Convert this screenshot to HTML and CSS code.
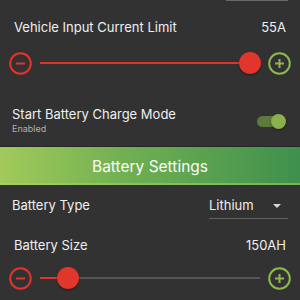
FILE: index.html
```html
<!DOCTYPE html>
<html>
<head>
<meta charset="utf-8">
<link rel="stylesheet" href="styles.css">
</head>
<body>
<div class="screen">
  <div class="prev-underline"><div class="line"></div></div>

  <div class="value-row first">
    <span class="label">Vehicle Input Current Limit</span>
    <span class="value">55A</span>
  </div>
  <div class="slider slider-1">
    <svg class="btn" width="23" height="23" viewBox="0 0 23 23"><circle cx="11.5" cy="11.5" r="10.3" fill="none" stroke="#e3342a" stroke-width="2"/><line x1="7" y1="11.5" x2="16" y2="11.5" stroke="#e3342a" stroke-width="2"/></svg>
    <div class="track">
      <div class="fill" style="width:95.5%"></div>
      <div class="thumb" style="left:95.5%"></div>
    </div>
    <svg class="btn" width="23" height="23" viewBox="0 0 23 23"><circle cx="11.5" cy="11.5" r="10.3" fill="none" stroke="#8cb84c" stroke-width="2"/><line x1="7" y1="11.5" x2="16" y2="11.5" stroke="#8cb84c" stroke-width="2"/><line x1="11.5" y1="7" x2="11.5" y2="16" stroke="#8cb84c" stroke-width="2"/></svg>
  </div>

  <div class="toggle-row">
    <div class="toggle-text">
      <div class="label">Start Battery Charge Mode</div>
      <div class="sub">Enabled</div>
    </div>
    <div class="toggle"><div class="toggle-thumb"></div></div>
  </div>

  <div class="banner">Battery Settings</div>

  <div class="select-row">
    <span class="label">Battery Type</span>
    <div class="dropdown">
      <span>Lithium</span>
      <span class="arrow"></span>
    </div>
  </div>

  <div class="value-row size">
    <span class="label">Battery Size</span>
    <span class="value">150AH</span>
  </div>
  <div class="slider slider-2">
    <svg class="btn" width="23" height="23" viewBox="0 0 23 23"><circle cx="11.5" cy="11.5" r="10.3" fill="none" stroke="#e3342a" stroke-width="2"/><line x1="7" y1="11.5" x2="16" y2="11.5" stroke="#e3342a" stroke-width="2"/></svg>
    <div class="track">
      <div class="fill" style="width:12.7%"></div>
      <div class="thumb" style="left:12.7%"></div>
    </div>
    <svg class="btn" width="23" height="23" viewBox="0 0 23 23"><circle cx="11.5" cy="11.5" r="10.3" fill="none" stroke="#8cb84c" stroke-width="2"/><line x1="7" y1="11.5" x2="16" y2="11.5" stroke="#8cb84c" stroke-width="2"/><line x1="11.5" y1="7" x2="11.5" y2="16" stroke="#8cb84c" stroke-width="2"/></svg>
  </div>
</div>
</body>
</html>
```
FILE: styles.css
```css
html, body {
  margin: 0;
  padding: 0;
  background: #323232;
}
body {
  width: 300px;
  height: 300px;
  overflow: hidden;
  font-family: Inter, "Noto Sans", sans-serif;
  color: #efefef;
}
.screen {
  display: flex;
  flex-direction: column;
}
.prev-underline {
  display: flex;
  justify-content: flex-end;
  padding-right: 12px;
  height: 1px;
}
.prev-underline .line {
  width: 62px;
  height: 1px;
  background: #6a6a6a;
}
.label {
  font-size: 13px;
  line-height: 17px;
}
.value-row {
  display: flex;
  justify-content: space-between;
  align-items: center;
  padding: 0 14px;
  height: 17px;
}
.value-row.first {
  margin-top: 18px;
}
.value-row.size {
  margin-top: 18px;
  padding-left: 14px;
}
.value {
  font-size: 13px;
  line-height: 17px;
}
.slider {
  display: flex;
  align-items: center;
  gap: 8px;
  padding: 0 9px;
  height: 24px;
}
.slider-1 {
  margin-top: 15px;
}
.slider-2 {
  margin-top: 12px;
}
.btn {
  flex: none;
  display: block;
}
.track {
  position: relative;
  flex: 1;
  height: 2px;
  background: #555;
}
.slider-1 .track {
  background: #e3342a;
}
.fill {
  height: 2px;
  background: #e3342a;
}
.thumb {
  position: absolute;
  top: 1px;
  width: 22px;
  height: 22px;
  margin-left: -11px;
  margin-top: -11px;
  border-radius: 50%;
  background: #e0362b;
  box-shadow: 0 1px 2px rgba(0,0,0,0.45);
}
.toggle-row {
  display: flex;
  align-items: center;
  justify-content: space-between;
  margin-top: 31px;
  padding: 0 19px 0 12px;
}
.toggle-text .label {
  line-height: 16px;
}
.sub {
  margin-top: 1px;
  font-size: 9px;
  line-height: 12px;
  color: #b0b0b0;
}
.toggle {
  position: relative;
  width: 24px;
  height: 11px;
  border-radius: 6px;
  background: #5c7a3c;
  margin-top: 1px;
}
.toggle-thumb {
  position: absolute;
  right: -5px;
  top: -2px;
  width: 15px;
  height: 15px;
  border-radius: 50%;
  background: #89b24b;
  box-shadow: 0 1px 2px rgba(0,0,0,0.4);
}
.banner {
  margin-top: 12px;
  height: 38px;
  display: flex;
  align-items: center;
  justify-content: center;
  font-size: 15.5px;
  color: #fafafa;
  background: linear-gradient(90deg, #a2ca5a 0%, #72b152 40%, #3f904d 100%);
  box-shadow: 0 -1px 0 #262626, inset 0 -2px 0 rgba(170, 215, 100, 0.5);
}
.select-row {
  display: flex;
  justify-content: space-between;
  align-items: flex-start;
  margin-top: 12px;
  padding: 0 12px 0 12px;
}
.dropdown {
  width: 79px;
  display: flex;
  justify-content: space-between;
  align-items: center;
  font-size: 13px;
  line-height: 17px;
  padding-bottom: 4px;
  border-bottom: 1px solid #626262;
}
.arrow {
  width: 0;
  height: 0;
  margin-right: 7px;
  border-left: 4px solid transparent;
  border-right: 4px solid transparent;
  border-top: 4px solid #d8d8d8;
}
```
